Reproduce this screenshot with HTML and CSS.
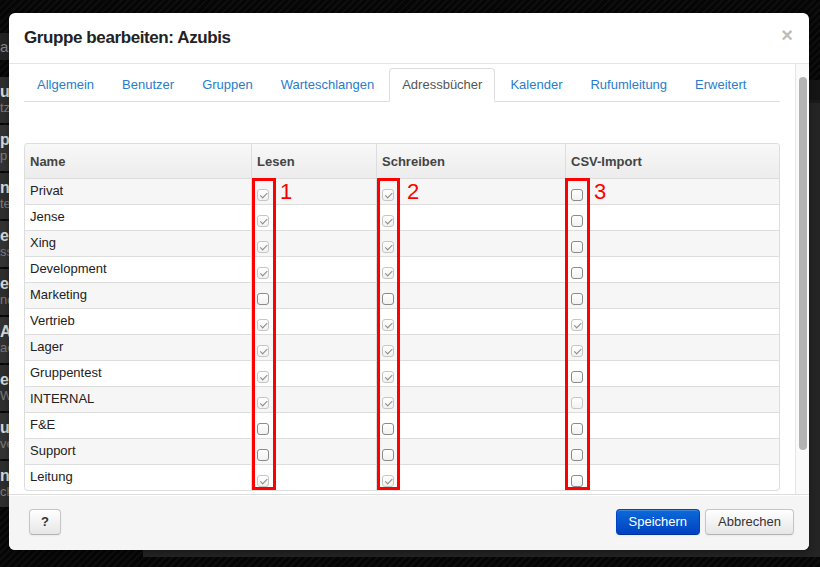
FILE: index.html
```html
<!DOCTYPE html>
<html lang="de">
<head>
<meta charset="utf-8">
<title>Gruppe bearbeiten: Azubis</title>
<link rel="stylesheet" href="styles.css">
</head>
<body>
<div class="backdrop">
  <aside class="side">
    <div class="side-head">ar</div>
    <ul class="side-list">
      <li><b>u</b><span>tz</span></li>
      <li><b>p</b><span>p</span></li>
      <li><b>n</b><span>te</span></li>
      <li><b>e</b><span>ss</span></li>
      <li><b>er</b><span>nd</span></li>
      <li><b>A</b><span>ac</span></li>
      <li><b>e</b><span>W</span></li>
      <li><b>u</b><span>ve</span></li>
      <li><b>n</b><span>ch</span></li>
    </ul>
  </aside>
  <main class="stage">
    <div class="stage-head"></div>
    <div class="stage-panel"></div>
  </main>
</div>

<div class="modal">
  <header class="modal-header">
    <h3 class="modal-title">Gruppe bearbeiten: Azubis</h3>
    <span class="close">×</span>
  </header>

  <div class="modal-main">
    <div class="modal-body">
      <ul class="tabs">
        <li><a href="#">Allgemein</a></li>
        <li><a href="#">Benutzer</a></li>
        <li><a href="#">Gruppen</a></li>
        <li><a href="#">Warteschlangen</a></li>
        <li class="active"><a href="#">Adressbücher</a></li>
        <li><a href="#">Kalender</a></li>
        <li><a href="#">Rufumleitung</a></li>
        <li><a href="#">Erweitert</a></li>
      </ul>

      <div class="tab-content">
        <div class="grid-wrap">
          <table class="perm">
            <thead>
              <tr><th class="c-name">Name</th><th class="c-read">Lesen</th><th class="c-write">Schreiben</th><th>CSV-Import</th></tr>
            </thead>
            <tbody>
              <tr><td>Privat</td><td class="cbc"><input class="cb" type="checkbox" checked disabled></td><td class="cbc"><input class="cb" type="checkbox" checked disabled></td><td class="cbc"><input class="cb" type="checkbox"></td></tr>
              <tr><td>Jense</td><td class="cbc"><input class="cb" type="checkbox" checked disabled></td><td class="cbc"><input class="cb" type="checkbox" checked disabled></td><td class="cbc"><input class="cb" type="checkbox"></td></tr>
              <tr><td>Xing</td><td class="cbc"><input class="cb" type="checkbox" checked disabled></td><td class="cbc"><input class="cb" type="checkbox" checked disabled></td><td class="cbc"><input class="cb" type="checkbox"></td></tr>
              <tr><td>Development</td><td class="cbc"><input class="cb" type="checkbox" checked disabled></td><td class="cbc"><input class="cb" type="checkbox" checked disabled></td><td class="cbc"><input class="cb" type="checkbox"></td></tr>
              <tr><td>Marketing</td><td class="cbc"><input class="cb" type="checkbox"></td><td class="cbc"><input class="cb" type="checkbox"></td><td class="cbc"><input class="cb" type="checkbox"></td></tr>
              <tr><td>Vertrieb</td><td class="cbc"><input class="cb" type="checkbox" checked disabled></td><td class="cbc"><input class="cb" type="checkbox" checked disabled></td><td class="cbc"><input class="cb" type="checkbox" checked disabled></td></tr>
              <tr><td>Lager</td><td class="cbc"><input class="cb" type="checkbox" checked disabled></td><td class="cbc"><input class="cb" type="checkbox" checked disabled></td><td class="cbc"><input class="cb" type="checkbox" checked disabled></td></tr>
              <tr><td>Gruppentest</td><td class="cbc"><input class="cb" type="checkbox" checked disabled></td><td class="cbc"><input class="cb" type="checkbox" checked disabled></td><td class="cbc"><input class="cb" type="checkbox"></td></tr>
              <tr><td>INTERNAL</td><td class="cbc"><input class="cb" type="checkbox" checked disabled></td><td class="cbc"><input class="cb" type="checkbox" checked disabled></td><td class="cbc"><input class="cb" type="checkbox" disabled></td></tr>
              <tr><td>F&amp;E</td><td class="cbc"><input class="cb" type="checkbox"></td><td class="cbc"><input class="cb" type="checkbox"></td><td class="cbc"><input class="cb" type="checkbox"></td></tr>
              <tr><td>Support</td><td class="cbc"><input class="cb" type="checkbox"></td><td class="cbc"><input class="cb" type="checkbox"></td><td class="cbc"><input class="cb" type="checkbox"></td></tr>
              <tr><td>Leitung</td><td class="cbc"><input class="cb" type="checkbox" checked disabled></td><td class="cbc"><input class="cb" type="checkbox" checked disabled></td><td class="cbc"><input class="cb" type="checkbox"></td></tr>
            </tbody>
          </table>

          <div class="mark mark-1"></div>
          <div class="mark mark-2"></div>
          <div class="mark mark-3"></div>
          <span class="mark-num num-1">1</span>
          <span class="mark-num num-2">2</span>
          <span class="mark-num num-3">3</span>
        </div>
      </div>
    </div>

    <div class="scrollbar"><div class="thumb"></div></div>
  </div>

  <footer class="modal-footer">
    <button class="btn btn-help" type="button">?</button>
    <span class="spacer"></span>
    <button class="btn btn-primary" type="button">Speichern</button>
    <button class="btn" type="button">Abbrechen</button>
  </footer>
</div>
</body>
</html>
```

FILE: styles.css
```css
html, body {
  margin: 0;
  padding: 0;
  height: 100%;
  overflow: hidden;
}

body {
  font-family: "Liberation Sans", Arial, Helvetica, sans-serif;
  font-size: 13px;
  color: #222;
  background: repeating-linear-gradient(135deg, #0e0e0e 0 2px, #060606 2px 5px);
}

/* ---------- backdrop (app behind the dialog) ---------- */
.backdrop {
  display: grid;
  grid-template-columns: 140px 1fr;
  height: 567px;
}

.side {
  padding-top: 33px;
  display: flex;
  flex-direction: column;
}

.side-head {
  height: 27px;
  background: #232323;
  color: #888;
  font-size: 15px;
  line-height: 27px;
  margin-bottom: 17px;
}

.side-list {
  list-style: none;
  margin: 0;
  padding: 0;
}

.side-list li {
  height: 46px;
  margin-bottom: 2px;
  background: #2e2e2e;
  display: flex;
  flex-direction: column;
  justify-content: center;
  line-height: 16px;
}

.side-list li:nth-child(even) {
  background: #333;
}

.side-list b {
  color: #d8d8d8;
  font-size: 16px;
}

.side-list span {
  color: #7c7c7c;
  font-size: 13px;
}

.stage {
  display: flex;
  flex-direction: column;
  padding: 80px 0 10px 3px;
}

.stage-head {
  height: 20px;
  background: #151515;
}

.stage-panel {
  flex: 1;
  background: #242424;
  border-top: 3px solid #1a1a1a;
}

/* ---------- modal ---------- */
.modal {
  position: absolute;
  left: 9px;
  top: 13px;
  width: 800px;
  height: 537px;
  background: #fff;
  border-radius: 6px;
  box-shadow: 0 3px 7px rgba(0, 0, 0, 0.3);
  display: flex;
  flex-direction: column;
  overflow: hidden;
}

.modal-header {
  height: 50px;
  flex: none;
  display: flex;
  align-items: center;
  justify-content: space-between;
  padding: 0 16px 0 15px;
  border-bottom: 1px solid #e5e5e5;
}

.modal-title {
  margin: 0;
  font-size: 17px;
  font-weight: bold;
  letter-spacing: -0.4px;
  color: #222;
}

.close {
  font-size: 20px;
  font-weight: bold;
  line-height: 1;
  color: #bcbcbc;
  margin-top: -6px;
}

.modal-main {
  flex: 1;
  min-height: 0;
  display: flex;
}

.modal-body {
  flex: 1;
  min-width: 0;
  overflow: hidden;
  padding: 4px 15px 0;
}

.scrollbar {
  flex: none;
  width: 8px;
  padding: 13px 2px 0 3px;
  background: #fafafa;
  border-left: 1px solid #e6e6e6;
}

.thumb {
  height: 373px;
  background: #b3b3b3;
  border-radius: 4px;
}

/* ---------- tabs ---------- */
.tabs {
  list-style: none;
  margin: 0;
  padding: 0;
  display: flex;
  border-bottom: 1px solid #ddd;
}

.tabs li {
  margin-right: 2px;
  margin-bottom: -1px;
}

.tabs a {
  display: block;
  padding: 8px 12px 8px;
  line-height: 16px;
  border: 1px solid transparent;
  border-radius: 4px 4px 0 0;
  color: #2a7ccb;
  text-decoration: none;
}

.tabs .active a {
  color: #555;
  background: #fff;
  border-color: #ddd #ddd transparent;
}

.tab-content {
  margin-top: 41px;
}

/* ---------- table ---------- */
.grid-wrap {
  position: relative;
}

.perm {
  width: 100%;
  table-layout: fixed;
  border-collapse: separate;
  border-spacing: 0;
  border: 1px solid #ddd;
  border-left: 0;
  border-radius: 4px;
}

.perm th,
.perm td {
  box-sizing: border-box;
  text-align: left;
  border-left: 1px solid #ddd;
  line-height: 18px;
}

.perm th {
  padding: 9px 5px 7px;
  font-weight: bold;
  color: #444;
  background: linear-gradient(#f8f8f8, #ececec);
}

.perm .c-name { width: 227px; }
.perm .c-read { width: 125px; }
.perm .c-write { width: 189px; }

.perm th:first-child { border-top-left-radius: 4px; }
.perm th:last-child { border-top-right-radius: 4px; }
.perm tbody tr:last-child td:first-child { border-bottom-left-radius: 4px; }
.perm tbody tr:last-child td:last-child { border-bottom-right-radius: 4px; }

.perm td {
  padding: 3px 5px 4px;
  border-top: 1px solid #ddd;
  color: #222;
}

.perm tbody tr:nth-child(odd) td {
  background: #f6f6f6;
}

.perm td.cbc {
  padding: 10px 5px 3px;
}

/* ---------- checkboxes ---------- */
.cb {
  -webkit-appearance: none;
  appearance: none;
  display: block;
  position: relative;
  width: 12px;
  height: 12px;
  margin: 0;
  border: 1px solid #8a8a8a;
  border-radius: 3px;
  background: linear-gradient(#fff, #f1f1f1);
}

.cb:checked,
.cb:disabled {
  border-color: #c6c6c6;
}

.cb:checked::after {
  content: "";
  position: absolute;
  left: 3.5px;
  top: 1px;
  width: 2.5px;
  height: 5.5px;
  border: solid #8a8a8a;
  border-width: 0 1.5px 1.5px 0;
  transform: rotate(45deg);
}

/* ---------- red annotations ---------- */
.mark {
  position: absolute;
  top: 35px;
  height: 312px;
  box-sizing: border-box;
  border: 3px solid #f00;
}

.mark-1 { left: 228px; width: 24px; }
.mark-2 { left: 353px; width: 23px; }
.mark-3 { left: 541px; width: 25px; }

.mark-num {
  position: absolute;
  top: 38px;
  font-size: 22px;
  line-height: 22px;
  color: #f00;
}

.num-1 { left: 256px; }
.num-2 { left: 383px; }
.num-3 { left: 570px; }

/* ---------- footer ---------- */
.modal-footer {
  flex: none;
  display: flex;
  align-items: center;
  gap: 5px;
  padding: 14px 15px 15px 20px;
  background: #f5f5f5;
  border-top: 1px solid #ddd;
  box-shadow: inset 0 1px 0 #fff;
}

.spacer {
  flex: 1;
}

.btn {
  height: 26px;
  padding: 0 12px;
  font-family: inherit;
  font-size: 13px;
  line-height: 24px;
  color: #333;
  border: 1px solid #c5c5c5;
  border-bottom-color: #b3b3b3;
  border-radius: 4px;
  background: linear-gradient(#fff, #e6e6e6);
  box-shadow: inset 0 1px 0 rgba(255, 255, 255, 0.2), 0 1px 2px rgba(0, 0, 0, 0.05);
}

.btn-help {
  width: 32px;
  padding: 0;
  font-weight: bold;
}

.btn-primary {
  color: #fff;
  background: linear-gradient(#0b6ad8, #0042c2);
  border-color: #0044c0 #0044c0 #00339a;
}
```
